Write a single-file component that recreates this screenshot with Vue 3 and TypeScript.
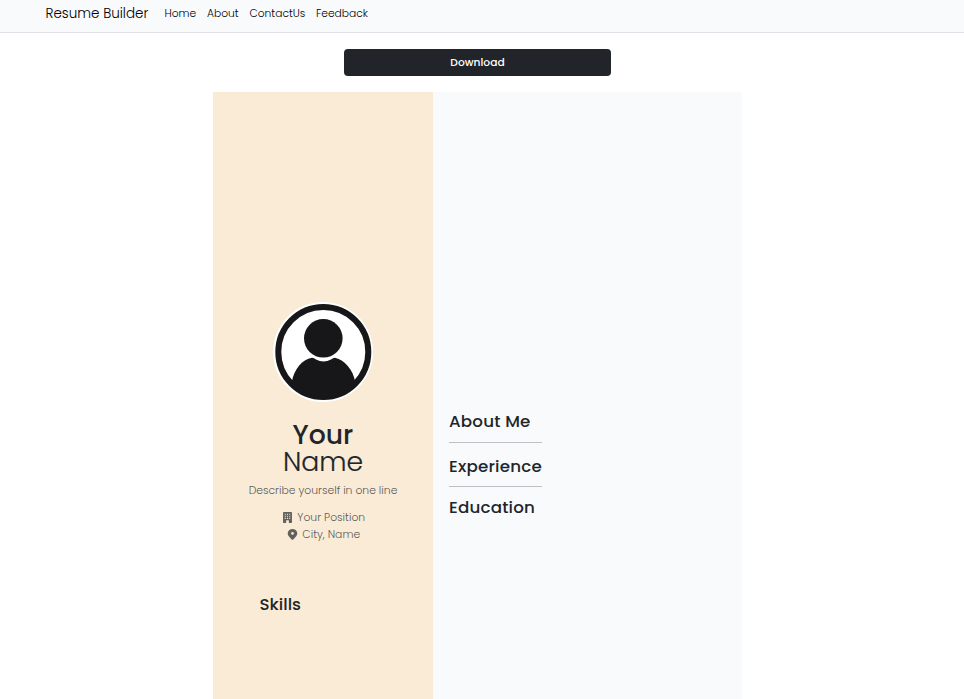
<script setup lang="ts">
interface Link { label: string; key: string }

const links: Link[] = [
  { label: 'Home', key: 'home' },
  { label: 'About', key: 'about' },
  { label: 'ContactUs', key: 'contact' },
  { label: 'Feedback', key: 'feedback' },
]
</script>

<template>
  <div class="page">
    <nav class="navbar">
      <a class="brand">Resume Builder</a>
      <a v-for="link in links" :key="link.key" class="link" :class="link.key">{{ link.label }}</a>
    </nav>

    <button class="download" type="button">Download</button>

    <main class="resume">
      <aside class="side">
        <svg class="avatar" viewBox="0 0 100 100">
          <circle cx="50" cy="50" r="50" fill="#fff" />
          <circle cx="50.3" cy="50" r="45" fill="none" stroke="#171719" stroke-width="6" />
          <circle cx="50.3" cy="36.3" r="19.3" fill="#171719" />
          <path d="M19 79C21 68 29 57 39 55.700Q41 56 43 57.500Q50.500 61.500 58 57.500Q60 56 62 55.700C72 58 80 68 82 79A46 46 0 0 1 50.300 95.500A46 46 0 0 1 19 79Z" fill="#171719" />
        </svg>
        <h1 class="name">
          <span class="first">Your</span>
          <span class="last">Name</span>
        </h1>
        <p class="tagline">Describe yourself in one line</p>
        <p class="detail position">
          <svg class="icon" viewBox="0 0 16 16">
            <path fill-rule="evenodd" d="M2.500 0a1 1 0 0 0-1 1v14a1 1 0 0 0 1 1H6v-3.500a.5.5 0 0 1 .5-.5h3a.5.5 0 0 1 .5.5V16h3.500a1 1 0 0 0 1-1V1a1 1 0 0 0-1-1zm1.500 2.500h1.500v1.500H4zm3.200 0h1.600v1.500H7.200zm3.300 0H12v1.500h-1.500zM4 5.500h1.500V7H4zm3.200 0h1.600V7H7.200zm3.300 0H12V7h-1.500zM4 8.500h1.500V10H4zm3.200 0h1.600V10H7.200zm3.300 0H12V10h-1.500z" />
          </svg>
          <span>Your Position</span>
        </p>
        <p class="detail city">
          <svg class="icon" viewBox="0 0 16 16">
            <path fill-rule="evenodd" d="M8 16s7-5.500 7-9.500A7 6.500 0 0 0 1 6.500C1 10.500 8 16 8 16zm0-7.500a2 2 0 1 1 0-4 2 2 0 0 1 0 4z" />
          </svg>
          <span>City, Name</span>
        </p>
        <h2 class="heading skills">Skills</h2>
      </aside>
      <section class="content">
        <div class="sections">
          <h2 class="heading about-me">About Me</h2>
          <hr />
          <h2 class="heading experience">Experience</h2>
          <hr />
          <h2 class="heading education">Education</h2>
        </div>
      </section>
    </main>
  </div>
</template>

<style>
body { margin: 0; background: #fff; overflow: hidden; }
</style>

<style scoped>
.page {
  box-sizing: border-box;
  height: 699px;
  overflow: hidden;
  display: flex;
  flex-direction: column;
  color: #212529;
  font-family: Poppins, Inter, "Open Sans", sans-serif;
}
h1, h2, p { margin: 0; }
.navbar {
  box-sizing: border-box;
  height: 33px;
  flex: none;
  display: flex;
  align-items: flex-start;
  padding-left: 45.500px;
  background: #f8fafc;
  border-bottom: 1px solid #dee2e6;
  line-height: 27px;
  white-space: nowrap;
}
.brand { width: 119px; font-size: 13.500px; font-weight: 300; color: #000; }
.link { font-size: 10.700px; font-weight: 300; color: #000; }
.home { width: 42.500px; }
.about { width: 42.500px; }
.contact { width: 66.500px; }
.download {
  width: 267px;
  height: 27px;
  flex: none;
  margin: 16px 0 16px 344px;
  padding: 0;
  border: 0;
  border-radius: 4px;
  background: #212529;
  color: #fff;
  font: 500 10.700px/26px Poppins, Inter, sans-serif;
}
.resume {
  width: 529px;
  flex: 1;
  margin-left: 213px;
  display: flex;
  background: #f8fafc;
}
.side {
  box-sizing: border-box;
  width: 220px;
  padding-top: 210px;
  display: flex;
  flex-direction: column;
  align-items: center;
  background: #faebd7;
}
.avatar { width: 100px; height: 100px; flex: none; }
.name {
  display: flex;
  flex-direction: column;
  align-items: center;
  margin-top: 19px;
  font-size: 26.700px;
  line-height: 27px;
}
.first { font-weight: 500; }
.last { font-weight: 300; -webkit-text-stroke: 0.2px #212529; }
.tagline {
  margin-top: 7px;
  font-size: 10.800px;
  line-height: 17px;
  font-weight: 300;
  color: #5c5b58;
  white-space: nowrap;
}
.detail {
  display: flex;
  align-items: center;
  gap: 4px;
  font-size: 10.800px;
  line-height: 17px;
  font-weight: 300;
  color: #5c5b58;
}
.position { margin-top: 10px; margin-left: 1.500px; }
.city { margin-left: 1.500px; }
.icon { width: 11px; height: 11px; fill: #626160; }
.heading { padding-bottom: 2px; font-size: 16.700px; font-weight: 500; line-height: 18px; letter-spacing: 0.200px; white-space: nowrap; }
.skills { align-self: flex-start; margin: 52px 0 0 46.500px; letter-spacing: 0; }
.content { flex: 1; padding: 320px 0 0 16px; }
.sections { width: 93px; }
hr { height: 1px; margin: 0; border: 0; background: #bdbfc2; }
.about-me { margin-bottom: 10px; }
.experience { margin: 14px 0 9px; }
.education { margin-top: 11px; }
</style>
